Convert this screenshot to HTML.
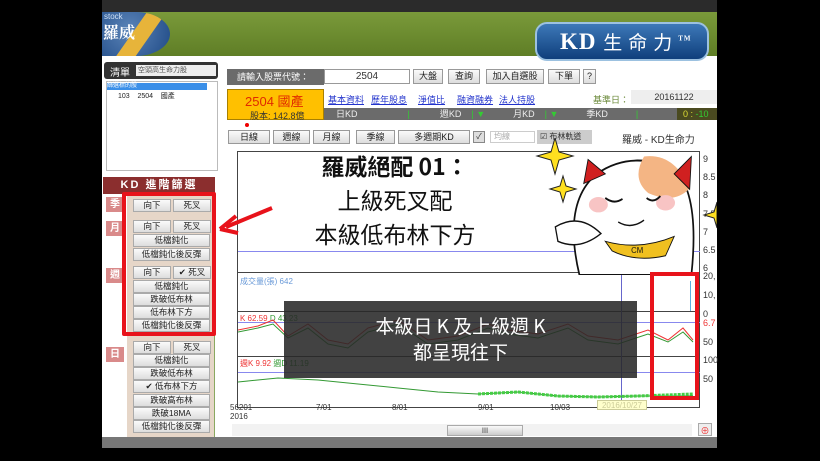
<!DOCTYPE html>
<html><head><meta charset="utf-8"><style>
*{margin:0;padding:0;box-sizing:border-box}
body{width:820px;height:461px;background:#000;position:relative;overflow:hidden;font-family:"Liberation Sans","Noto Sans CJK TC",sans-serif;font-size:9px;color:#333}
.a{position:absolute}
.btn{position:absolute;background:linear-gradient(#fafafa,#ddd);border:1px solid #999;text-align:center;font-size:9px;line-height:13px;color:#222}
.lk{position:absolute;color:#2233cc;text-decoration:underline;font-size:9px;top:93px}
.pb{position:absolute;left:133px;width:77px;height:13px;background:linear-gradient(#fafafa,#ddd);border:1px solid #aaa;font-size:8.5px;line-height:11px;text-align:center;color:#222}
.tab{position:absolute;left:106px;width:18px;height:15px;background:#d98a8a;color:#fff;font-size:10px;line-height:15px;text-align:center;font-weight:bold}
.ax{position:absolute;left:703px;font-size:9px;color:#333}
</style></head><body>
<div class="a" style="left:102px;top:0;width:615px;height:12px;background:#2b2b2b"></div>
<div class="a" style="left:102px;top:12px;width:615px;height:44px;background:linear-gradient(#7a9a3a,#5f7e26)"></div>
<div class="a" style="left:102px;top:56px;width:615px;height:381px;background:#fff"></div>
<div class="a" style="left:102px;top:437px;width:615px;height:11px;background:#777"></div>
<!-- logo -->
<div class="a" style="left:102px;top:12px;width:68px;height:44px;border-radius:0 50% 50% 0;background:radial-gradient(circle at 40% 40%,#5b84b8,#1f4a86);overflow:hidden"><div style="position:absolute;left:30px;top:-6px;width:16px;height:60px;background:#e7b43a;transform:rotate(35deg)"></div></div>
<div class="a" style="left:104px;top:12px;color:#cfe0f5;font-size:8px">stock</div>
<div class="a" style="left:103px;top:20px;color:#fff;font-size:16px;font-weight:bold;font-family:'Noto Serif CJK SC',serif">羅威</div>
<!-- KD logo -->
<div class="a" style="left:535px;top:22px;width:174px;height:39px;border-radius:12px;background:linear-gradient(#3d78b8,#0f3f7c);border:2px solid #9cc1e0"></div>
<div class="a" style="left:560px;top:28px;color:#fff;font-size:23px;font-weight:bold;font-family:'Liberation Serif',serif;letter-spacing:1px">KD <span style="font-family:'Noto Sans CJK TC',sans-serif;font-weight:normal;font-size:19px;letter-spacing:6px">生命力</span><sup style="font-size:7px">TM</sup></div>
<!-- left list -->
<div class="a" style="left:104px;top:62px;width:114px;height:17px;background:#333;border-radius:3px"></div>
<div class="a" style="left:110px;top:64px;color:#fff;font-size:10px">清單</div>
<div class="a" style="left:136px;top:65px;width:80px;height:11px;background:#eee;font-size:7px;color:#555;line-height:11px;padding-left:2px">空頭高生命力股</div>
<div class="a" style="left:106px;top:81px;width:112px;height:90px;background:#fff;border:1px solid #bbb"></div>
<div class="a" style="left:107px;top:83px;width:100px;height:7px;background:#3b8fe8;color:#fff;font-size:6px;line-height:7px">篩選標的股</div>
<div class="a" style="left:118px;top:91px;font-size:7px;color:#222">103&nbsp;&nbsp;&nbsp;&nbsp;2504&nbsp;&nbsp;&nbsp;&nbsp;國產</div>
<!-- KD filter -->
<div class="a" style="left:103px;top:177px;width:112px;height:17px;background:#8b2e2e;color:#fff;font-size:11px;line-height:17px;text-align:center;font-weight:bold;letter-spacing:2px">KD 進階篩選</div>
<div class="a" style="left:127px;top:194px;width:88px;height:243px;background:#e6d6c8;border-right:1px solid #8aa860"></div>
<div class="tab" style="top:197px">季</div>
<div class="tab" style="top:221px">月</div>
<div class="tab" style="top:268px">週</div>
<div class="tab" style="top:347px">日</div>
<div class="pb" style="top:199px;width:38px">向下</div><div class="pb" style="top:199px;left:173px;width:38px">死叉</div>
<div class="pb" style="top:220px;width:38px">向下</div><div class="pb" style="top:220px;left:173px;width:38px">死叉</div>
<div class="pb" style="top:234px">低檔鈍化</div>
<div class="pb" style="top:248px">低檔鈍化後反彈</div>
<div class="pb" style="top:266px;width:38px">向下</div><div class="pb" style="top:266px;left:173px;width:38px">✔ 死叉</div>
<div class="pb" style="top:280px">低檔鈍化</div>
<div class="pb" style="top:293px">跌破低布林</div>
<div class="pb" style="top:306px">低布林下方</div>
<div class="pb" style="top:319px">低檔鈍化後反彈</div>
<div class="pb" style="top:341px;width:38px">向下</div><div class="pb" style="top:341px;left:173px;width:38px">死叉</div>
<div class="pb" style="top:354px">低檔鈍化</div>
<div class="pb" style="top:367px">跌破低布林</div>
<div class="pb" style="top:380px">✔ 低布林下方</div>
<div class="pb" style="top:394px">跌破高布林</div>
<div class="pb" style="top:407px">跌破18MA</div>
<div class="pb" style="top:420px">低檔鈍化後反彈</div>
<div class="a" style="left:122px;top:192px;width:94px;height:144px;border:4px solid #e8131b;border-radius:2px"></div>
<!-- top row -->
<div class="a" style="left:227px;top:69px;width:97px;height:16px;background:#6b6b6b;color:#fff;font-size:9px;line-height:16px;padding-left:10px">請輸入股票代號：</div>
<div class="a" style="left:324px;top:69px;width:86px;height:15px;border:1px solid #999;background:#fff;font-size:10px;text-align:center;line-height:13px">2504</div>
<div class="btn" style="left:413px;top:69px;width:30px;height:15px">大盤</div>
<div class="btn" style="left:448px;top:69px;width:32px;height:15px">查詢</div>
<div class="btn" style="left:486px;top:69px;width:58px;height:15px">加入自選股</div>
<div class="btn" style="left:548px;top:69px;width:32px;height:15px">下單</div>
<div class="btn" style="left:583px;top:69px;width:13px;height:15px">?</div>
<div class="a" style="left:227px;top:89px;width:97px;height:31px;background:#ffc000;border:1px solid #a88000"></div>
<div class="a" style="left:245px;top:91px;color:#e02a00;font-size:13px">2504 國產</div>
<div class="a" style="left:250px;top:109px;font-size:9px;color:#333">股本: 142.8億</div>
<span class="lk" style="left:328px">基本資料</span><span class="lk" style="left:371px">歷年股息</span><span class="lk" style="left:418px">淨值比</span><span class="lk" style="left:457px">融資融券</span><span class="lk" style="left:499px">法人持股</span>
<div class="a" style="left:593px;top:93px;color:#6b8a3a;font-size:9px">基準日：</div>
<div class="a" style="left:631px;top:90px;width:86px;height:14px;background:#eee;font-size:9px;text-align:center;line-height:14px">20161122</div>
<div class="a" style="left:324px;top:108px;width:393px;height:12px;background:#6b6b6b;color:#eee;font-size:9px;line-height:12px"><span style="margin-left:12px">日KD</span><span style="margin-left:50px;color:#3c3">|</span><span style="margin-left:30px">週KD</span><span style="margin-left:10px;color:#3c3">| ▼</span><span style="margin-left:28px">月KD</span><span style="margin-left:10px;color:#3c3">| ▼</span><span style="margin-left:28px">季KD</span><span style="margin-left:28px;color:#3c3">|</span></div>
<div class="a" style="left:677px;top:108px;width:40px;height:12px;background:#4a4a20;color:#dd3;font-size:9px;line-height:12px;padding-left:6px">0 : <span style="color:#3c3">-10</span></div>
<div class="a" style="left:245px;top:123px;width:4px;height:4px;border-radius:50%;background:#e00"></div>
<!-- row buttons -->
<div class="btn" style="left:228px;top:130px;width:42px;height:14px">日線</div>
<div class="btn" style="left:273px;top:130px;width:37px;height:14px">週線</div>
<div class="btn" style="left:313px;top:130px;width:37px;height:14px">月線</div>
<div class="btn" style="left:356px;top:130px;width:39px;height:14px">季線</div>
<div class="btn" style="left:398px;top:130px;width:72px;height:14px">多週期KD</div>
<div class="a" style="left:473px;top:131px;width:12px;height:12px;border:1px solid #888;background:#ddd;font-size:8px;text-align:center;line-height:10px">✓</div>
<div class="a" style="left:490px;top:131px;width:45px;height:12px;border:1px solid #ccc;color:#aaa;font-size:8px;line-height:10px;padding-left:3px">均線</div>
<div class="a" style="left:537px;top:130px;width:55px;height:14px;background:#ccc;font-size:8px;line-height:14px;padding-left:3px">☑ 布林軌道</div>
<div class="a" style="left:622px;top:131px;font-size:10px;color:#333">羅威 - KD生命力</div>
<!-- chart -->
<div class="a" style="left:237px;top:151px;width:463px;height:257px;border:1px solid #444;background:#fff"></div>
<div class="a" style="left:238px;top:251px;width:462px;height:1px;background:#8888ee"></div>
<div class="a" style="left:238px;top:272px;width:462px;height:1px;background:#444"></div>
<div class="a" style="left:238px;top:311px;width:462px;height:1px;background:#444"></div>
<div class="a" style="left:238px;top:356px;width:462px;height:1px;background:#444"></div>
<div class="a" style="left:238px;top:372px;width:462px;height:1px;background:#8888ee"></div>
<div class="a" style="left:238px;top:322px;width:462px;height:1px;background:#8888ee"></div>
<div class="a" style="left:621px;top:272px;width:1px;height:136px;background:#6666cc"></div>
<div class="a" style="left:240px;top:276px;font-size:8px;color:#6a9ad8">成交量(張) 642</div>
<div class="a" style="left:240px;top:314px;font-size:8px;color:#e33">K 62.59 <span style="color:#393">D 43.23</span></div>
<div class="a" style="left:240px;top:358px;font-size:8px;color:#e33">週K 9.92 <span style="color:#393">週D 11.19</span></div>
<svg class="a" style="left:238px;top:300px" width="462" height="110">
<polyline fill="none" stroke="#e33" stroke-width="1" points="0,30 20,26 35,20 50,36 70,24 90,40 110,44 130,28 160,20 190,40 220,36 250,24 270,30 300,34 330,24 350,36 380,40 410,30 430,40 445,28 455,40"/>
<polyline fill="none" stroke="#393" stroke-width="1" points="0,32 20,28 35,24 50,38 70,28 90,44 110,48 130,32 160,24 190,44 220,40 250,28 270,34 300,38 330,28 350,40 380,44 410,34 430,42 445,32 455,42"/>
<polyline fill="none" stroke="#393" stroke-width="1" points="0,82 40,78 80,80 120,84 160,88 200,92 240,94 280,92 320,96 360,97 400,96 455,96"/>
<polyline fill="none" stroke="#4c4" stroke-width="3" stroke-dasharray="3,1" points="240,94 280,92 320,96 360,97 400,96 455,94"/>
</svg>
<div class="a" style="left:690px;top:281px;width:1px;height:30px;background:#5ab0e0"></div>
<div class="ax" style="top:154px">9</div><div class="ax" style="top:172px">8.5</div><div class="ax" style="top:190px">8</div><div class="ax" style="top:209px">7.5</div><div class="ax" style="top:227px">7</div><div class="ax" style="top:245px">6.5</div><div class="ax" style="top:263px">6</div><div class="ax" style="top:271px">20,</div><div class="ax" style="top:290px">10,</div><div class="ax" style="top:309px">0</div><div class="ax" style="top:318px;color:#e33">6.7</div><div class="ax" style="top:337px">50</div><div class="ax" style="top:355px">100</div><div class="ax" style="top:374px">50</div>
<div class="a" style="left:230px;top:403px;font-size:8px">56201<br>2016</div>
<div class="a" style="left:316px;top:403px;font-size:8px">7/01</div>
<div class="a" style="left:392px;top:403px;font-size:8px">8/01</div>
<div class="a" style="left:478px;top:403px;font-size:8px">9/01</div>
<div class="a" style="left:550px;top:403px;font-size:8px">10/03</div>
<div class="a" style="left:597px;top:400px;width:50px;height:10px;background:#ffffcc;border:1px solid #cc9;font-size:8px;color:#cc9;text-align:center;line-height:9px">2016/10/27</div>
<div class="a" style="left:232px;top:424px;width:460px;height:12px;background:#f2f2f2"></div>
<div class="a" style="left:447px;top:425px;width:76px;height:11px;background:linear-gradient(#fafafa,#ccc);border:1px solid #aaa;font-size:7px;text-align:center">Ⅲ</div>
<div class="a" style="left:698px;top:423px;width:14px;height:13px;border:1px solid #aaa;background:#eee;color:#e33;font-size:9px;text-align:center">⊕</div>
<!-- cat -->
<svg class="a" style="left:545px;top:145px" width="155" height="130" viewBox="0 0 180 135" preserveAspectRatio="none">
<path d="M40,135 Q20,60 60,30 Q100,5 150,25 Q180,50 170,135Z" fill="#fff" stroke="#111" stroke-width="2"/>
<path d="M115,12 Q150,8 168,45 Q150,62 120,50 Q100,35 115,12Z" fill="#f4b584"/>
<path d="M45,40 L50,15 L70,30Z" fill="#d02020" stroke="#111"/>
<path d="M150,30 L170,12 L168,46Z" fill="#d02020" stroke="#111"/>
<ellipse cx="62" cy="62" rx="11" ry="8" fill="#f8c4c4"/>
<ellipse cx="140" cy="60" rx="11" ry="8" fill="#f8c4c4"/>
<path d="M12,85 Q40,70 65,92 Q40,110 15,100Z" fill="#fff" stroke="#111" stroke-width="1.5"/>
<path d="M70,100 Q110,110 150,95 L140,115 Q105,122 78,110Z" fill="#f0c020" stroke="#111"/>
<text x="100" y="112" font-size="9" fill="#111" font-family="Liberation Sans">CM</text>
<path d="M70,55 Q80,62 90,56 M118,55 Q126,61 134,53" stroke="#111" fill="none" stroke-width="2"/>
<path d="M85,80 Q100,88 115,78" stroke="#111" fill="none" stroke-width="1.5"/>
</svg>
<svg class="a" style="left:535px;top:138px" width="60" height="80">
<path d="M20,0 L24,14 L38,18 L24,22 L20,36 L16,22 L2,18 L16,14Z" fill="#ffe020" stroke="#222"/>
<path d="M28,38 L31,48 L41,51 L31,54 L28,64 L25,54 L15,51 L25,48Z" fill="#ffe020" stroke="#222"/>
</svg>
<svg class="a" style="left:700px;top:200px" width="17" height="30"><path d="M17,2 L14,12 L4,15 L14,18 L17,28Z" fill="#ffe020" stroke="#222"/></svg>
<!-- title overlay -->
<div class="a" style="left:255px;top:148px;width:280px;text-align:center;font-size:23px;line-height:34px;color:#111;font-family:'Noto Sans CJK TC',sans-serif"><b>羅威絕配 01：</b><br>上級死叉配<br>本級低布林下方</div>
<div class="a" style="left:284px;top:301px;width:353px;height:77px;background:rgba(40,40,40,0.88);color:#fff;text-align:center;font-size:19px;line-height:26px;padding-top:12px;font-family:'Noto Sans CJK TC',sans-serif">本級日 K 及上級週 K<br>都呈現往下</div>
<!-- red highlights -->
<div class="a" style="left:650px;top:272px;width:49px;height:128px;border:4px solid #e8131b"></div>
<svg class="a" style="left:218px;top:200px" width="60" height="35"><line x1="54" y1="8" x2="8" y2="27" stroke="#e8131b" stroke-width="4"/><path d="M2,29 L18,16 M2,29 L20,33" stroke="#e8131b" stroke-width="4" fill="none"/></svg>
</body></html>
